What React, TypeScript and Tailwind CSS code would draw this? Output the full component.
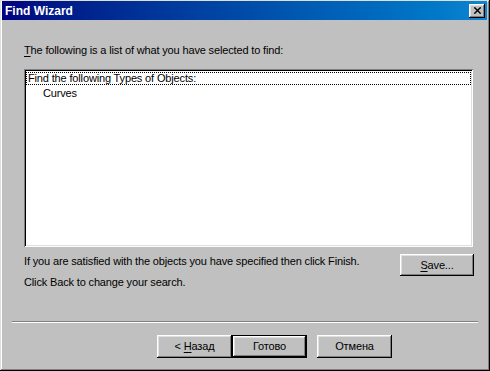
import { X } from 'lucide-react'

const FONT = { fontFamily: '"Liberation Sans", Arial, sans-serif' }

function Mnemonic({ children }: { children: string }) {
    return <span className="underline underline-offset-2">{children}</span>
}

function Button({
    children,
    isDefault,
    className,
}: {
    children: React.ReactNode
    isDefault?: boolean
    className?: string
}) {
    if (isDefault) {
        return (
            <div className={`border border-black ${className}`}>
                <div className="flex h-full w-full items-center justify-center bg-[#c0c0c0] text-[11px] text-black shadow-[inset_-1px_-1px_#000,inset_1px_1px_#fff,inset_-2px_-2px_#808080,inset_2px_2px_#dfdfdf]">
                    {children}
                </div>
            </div>
        )
    }

    return (
        <div
            className={`flex items-center justify-center bg-[#c0c0c0] text-[11px] text-black shadow-[inset_-1px_-1px_#000,inset_1px_1px_#fff,inset_-2px_-2px_#808080,inset_2px_2px_#dfdfdf] ${className}`}
        >
            {children}
        </div>
    )
}

export default function App() {
    return (
        <div
            style={FONT}
            className="flex h-[371px] w-[490px] flex-col bg-[#c0c0c0] pl-[2px] pr-[3px] pt-[1px] shadow-[inset_-1px_-1px_#000,inset_1px_1px_#dfdfdf,inset_-2px_-2px_#808080,inset_2px_2px_#fff]"
        >
            {/* title bar */}
            <div className="flex h-[19px] items-center justify-between bg-linear-to-r from-[#000080] to-[#1084d0] pl-[3px] pr-[2px]">
                <span className="text-[12px] font-bold text-white">Find Wizard</span>
                <div className="flex h-[14px] w-[16px] items-center justify-center bg-[#c0c0c0] shadow-[inset_-1px_-1px_#000,inset_1px_1px_#fff,inset_-2px_-2px_#808080,inset_2px_2px_#dfdfdf]">
                    <X size={11} strokeWidth={3} className="text-black" />
                </div>
            </div>

            <div className="flex flex-1 flex-col pl-[22px] pr-[13px] tracking-[-0.15px]">
                <p className="mt-[24px] text-[11px] leading-[13px] text-black">
                    <Mnemonic>T</Mnemonic>he following is a list of what you have selected to find:
                </p>

                <div className="mt-[12px] h-[178px] w-[449px] bg-white p-[2px] shadow-[inset_1px_1px_#808080,inset_-1px_-1px_#fff,inset_2px_2px_#000,inset_-2px_-2px_#dfdfdf]">
                    <div className="mt-[1px] border border-dotted border-black pl-[1px] text-[11px] leading-[11px] text-black">
                        Find the following Types of Objects:
                    </div>
                    <div className="mt-[2px] pl-[17px] text-[11px] leading-[12px] text-black">
                        Curves
                    </div>
                </div>

                <div className="mt-[7px] flex items-start justify-between">
                    <div className="flex flex-col gap-[8px] pt-[1px] text-[11px] leading-[13px] text-black">
                        <span>If you are satisfied with the objects you have specified then click Finish.</span>
                        <span>Click Back to change your search.</span>
                    </div>
                    <Button className="h-[22px] w-[74px]">
                        <span>
                            <Mnemonic>S</Mnemonic>ave...
                        </span>
                    </Button>
                </div>

                <div className="-ml-[12px] mt-[32px] w-[466px] border-b border-t border-b-white border-t-[#808080]" />

                <div className="mt-[12px] flex pl-[133px]">
                    <Button className="h-[23px] w-[75px]">
                        <span>
                            &lt; <Mnemonic>Н</Mnemonic>азад
                        </span>
                    </Button>
                    <Button isDefault className="h-[23px] w-[75px]">
                        Готово
                    </Button>
                    <Button className="ml-[10px] h-[23px] w-[75px]">Отмена</Button>
                </div>
            </div>
        </div>
    )
}
